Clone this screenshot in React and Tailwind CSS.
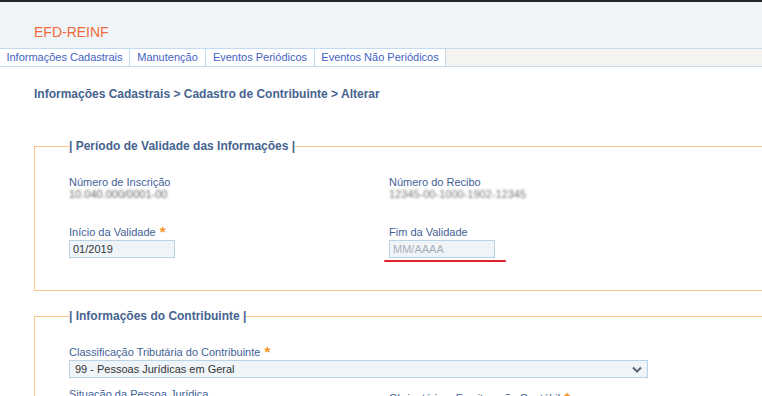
import React from 'react';

const Asterisk = () => (
    <span className="relative top-[1px] ml-1 text-[15px] font-bold leading-[0px] text-[#f7931e]">*</span>
);

const Field = ({ label, required, children }) => (
    <div className="flex flex-col">
        <label className="text-[11px] leading-[13px] text-[#3f5f98]">
            {label}
            {required && <Asterisk />}
        </label>
        {children}
    </div>
);

const App = () => {
    const tabs = [
        { label: 'Informações Cadastrais', width: 'w-[130px]' },
        { label: 'Manutenção', width: 'w-[76px]' },
        { label: 'Eventos Periódicos', width: 'w-[109px]' },
        { label: 'Eventos Não Periódicos', width: 'w-[131px]' },
    ];

    return (
        <div className="h-[396px] w-[762px] overflow-hidden bg-white font-['Liberation_Sans',Arial,sans-serif]">
            {/* Cabeçalho */}
            <div className="h-[2px] bg-[#22262b]" />
            <div className="flex h-[46px] items-end bg-[#eff4f8] pb-[8px] pl-[34px]">
                <span className="text-[14px] leading-[16px] text-[#f26b3a]">EFD-REINF</span>
            </div>

            {/* Menu */}
            <div className="flex h-[19px] border-y border-[#c3dbee] bg-[#f4f3ef]">
                {tabs.map(tab => (
                    <div
                        key={tab.label}
                        className={`${tab.width} flex items-center justify-center border-r border-[#c3dbee] bg-white text-[11px] text-[#4262c4]`}
                    >
                        {tab.label}
                    </div>
                ))}
            </div>

            <div className="w-[820px] pl-[34px]">
                <h1 className="mt-[20px] text-[12px] font-bold leading-[14px] text-[#46638f]">
                    Informações Cadastrais &gt; Cadastro de Contribuinte &gt; Alterar
                </h1>

                {/* Período de Validade */}
                <fieldset className="mt-[38px] border border-[#fcc68c] pb-[32px] pl-[34px]">
                    <legend className="text-[12px] font-bold leading-[14px] text-[#46638f]">
                        | Período de Validade das Informações |
                    </legend>

                    <div className="mt-[23px] grid grid-cols-[320px_320px]">
                        <Field label="Número de Inscrição">
                            <span className="text-[11px] leading-[11px] text-[#666] blur-[1px]">10.040.000/0001-00</span>
                        </Field>
                        <Field label="Número do Recibo">
                            <span className="text-[11px] leading-[11px] text-[#777] blur-[1px]">12345-00-1000-1902-12345</span>
                        </Field>
                    </div>

                    <div className="mt-[26px] grid grid-cols-[320px_320px]">
                        <Field label="Início da Validade" required>
                            <div className="mt-[1px] flex h-[18px] w-[106px] items-center border border-[#b9d3e6] bg-[#eff4f8] px-[3px] text-[11px] text-[#333]">
                                01/2019
                            </div>
                        </Field>
                        <Field label="Fim da Validade">
                            <div className="relative mt-[1px] w-[106px]">
                                <div className="flex h-[18px] items-center border border-[#b9d3e6] bg-[#eff4f8] px-[3px] text-[11px] text-[#aab0b8]">
                                    MM/AAAA
                                </div>
                                <div className="absolute left-[-5px] top-[20px] h-[2px] w-[122px] rounded-full bg-[#e4202a]" />
                            </div>
                        </Field>
                    </div>
                </fieldset>

                {/* Informações do Contribuinte */}
                <fieldset className="mt-[18px] border border-[#fcc68c] pb-[30px] pl-[34px]">
                    <legend className="text-[12px] font-bold leading-[14px] text-[#46638f]">
                        | Informações do Contribuinte |
                    </legend>

                    <div className="mt-[23px]">
                        <Field label="Classificação Tributária do Contribuinte" required>
                            <div className="mt-[1px] flex h-[18px] w-[579px] items-center justify-between border border-[#b9d3e6] bg-[#eff4f8] pl-[5px] pr-[5px] text-[11px] text-[#333]">
                                <span>99 - Pessoas Jurídicas em Geral</span>
                                <svg width="10" height="7" viewBox="0 0 10 7">
                                    <path d="M1 1.5 L5 5.5 L9 1.5" fill="none" stroke="#5b6272" strokeWidth="2" />
                                </svg>
                            </div>
                        </Field>
                    </div>

                    <div className="mt-[10px] grid grid-cols-[320px_320px]">
                        <Field label="Situação da Pessoa Jurídica" />
                        <div className="pt-[4px]">
                            <Field label="Obrigatória a Escrituração Contábil" required />
                        </div>
                    </div>
                </fieldset>
            </div>
        </div>
    );
};

export default App;
